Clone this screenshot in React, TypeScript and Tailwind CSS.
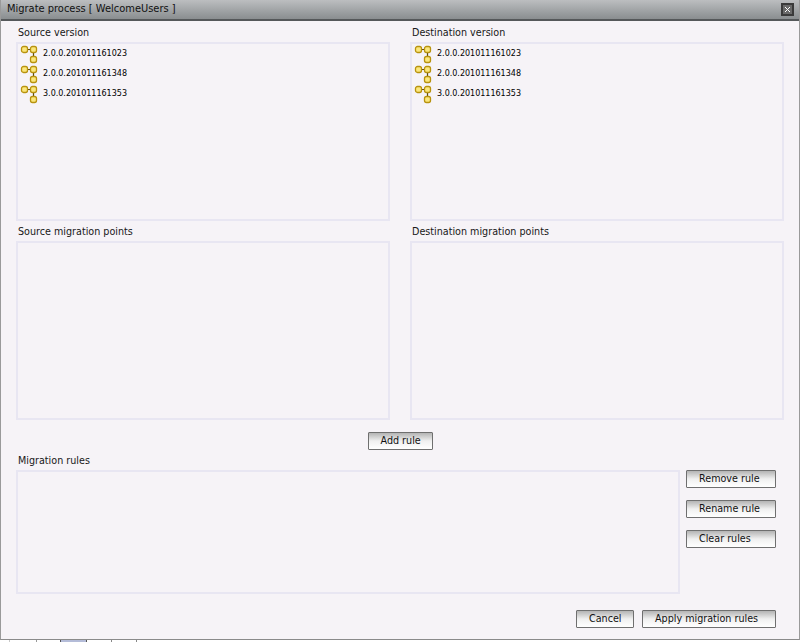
import type { ReactNode } from 'react';

const versions = ['2.0.0.201011161023', '2.0.0.201011161348', '3.0.0.201011161353'];

function ProcessIcon() {
  return (
    <svg width="18" height="20" viewBox="0 0 18 20" className="shrink-0">
      <path d="M7 5.5H11M13.5 8.5V13" stroke="#5f4c0e" strokeWidth="1.2" fill="none" />
      <rect x="1.5" y="2.5" width="6" height="6" rx="2" fill="#fbe77c" stroke="#b8930f" strokeWidth="1.3" />
      <rect x="10.5" y="2.5" width="6" height="6" rx="2" fill="#fbe77c" stroke="#b8930f" strokeWidth="1.3" />
      <rect x="10.5" y="12.5" width="6" height="6" rx="2" fill="#fbe77c" stroke="#b8930f" strokeWidth="1.3" />
    </svg>
  );
}

function ListBox({ className, children }: { className: string; children?: ReactNode }) {
  return <div className={`border-2 border-[#e8e6f2] ${className}`}>{children}</div>;
}

function VersionList() {
  return (
    <ListBox className="h-[179px] pl-[2px]">
      {versions.map((version) => (
        <div key={version} className="flex h-[20px] items-center gap-[5px]">
          <ProcessIcon />
          <span className="text-[8px] text-black">{version}</span>
        </div>
      ))}
    </ListBox>
  );
}

function Field({ label, children }: { label: string; children: ReactNode }) {
  return (
    <div>
      <div className="h-[20px] pl-[2px] pt-[4px] text-[9.6px] leading-[14px] text-[#181818]">{label}</div>
      {children}
    </div>
  );
}

function ActionButton({ label, className }: { label: string; className: string }) {
  return (
    <button
      className={`h-[18px] rounded-[1px] border border-[#6f6f6f] bg-gradient-to-b from-[#b4b4b4] via-[#f0f0f0] to-[#ffffff] pl-[12px] text-left text-[9.6px] leading-[14px] text-[#111] ${className}`}
    >
      {label}
    </button>
  );
}

export default function App() {
  return (
    <div className="h-[642px] w-[800px] overflow-hidden bg-white font-['DejaVu_Sans',sans-serif]">
      <div className="flex h-[640px] flex-col border-x border-b border-x-[#9a9a9a] border-b-[#8a8a8a] bg-[#f6f3f7]">
        <div className="flex h-[21px] shrink-0 items-center justify-between border-b-2 border-[#55585a] bg-gradient-to-b from-[#bcbec0] to-[#8a8e90] pl-[6px] pr-[5px]">
          <span className="text-[9.9px] text-[#111]">Migrate process [ WelcomeUsers ]</span>
          <div className="flex h-[13px] w-[13px] items-center justify-center border-2 border-[#3a3a3a] bg-[#6a6a6a]">
            <svg width="9" height="9" viewBox="0 0 9 9" className="shrink-0">
              <path d="M2 2L7 7M7 2L2 7" stroke="#fff" strokeWidth="1" />
            </svg>
          </div>
        </div>

        <div className="flex flex-1 flex-col pl-[15px] pr-[15px] pt-[1px]">
          <div className="grid grid-cols-[374px_374px] gap-x-[20px]">
            <Field label="Source version"><VersionList /></Field>
            <Field label="Destination version"><VersionList /></Field>
            <Field label="Source migration points"><ListBox className="h-[179px]" /></Field>
            <Field label="Destination migration points"><ListBox className="h-[179px]" /></Field>
          </div>

          <div className="mt-[12px] flex justify-center">
            <ActionButton label="Add rule" className="w-[65px]" />
          </div>

          <div className="flex">
            <div className="w-[664px]">
              <Field label="Migration rules"><ListBox className="h-[124px]" /></Field>
            </div>
            <div className="ml-[6px] flex flex-col gap-[12px] pt-[20px]">
              <ActionButton label="Remove rule" className="w-[90px]" />
              <ActionButton label="Rename rule" className="w-[90px]" />
              <ActionButton label="Clear rules" className="w-[90px]" />
            </div>
          </div>

          <div className="mt-[16px] flex justify-end gap-[8px] pr-[8px]">
            <ActionButton label="Cancel" className="w-[58px]" />
            <ActionButton label="Apply migration rules" className="w-[134px]" />
          </div>
        </div>
      </div>

      {/* bit of the page showing under the window */}
      <div className="flex h-[2px]">
        <div className="ml-[9px] w-[27px] border-l border-[#c8c8c8]" />
        <div className="w-[24px] border-l border-[#9a9a9a]" />
        <div className="w-[27px] border-x border-[#555] bg-[#b4bcd8]" />
        <div className="w-[25px] border-r border-[#888]" />
        <div className="w-[25px] border-r border-[#888]" />
      </div>
    </div>
  );
}
